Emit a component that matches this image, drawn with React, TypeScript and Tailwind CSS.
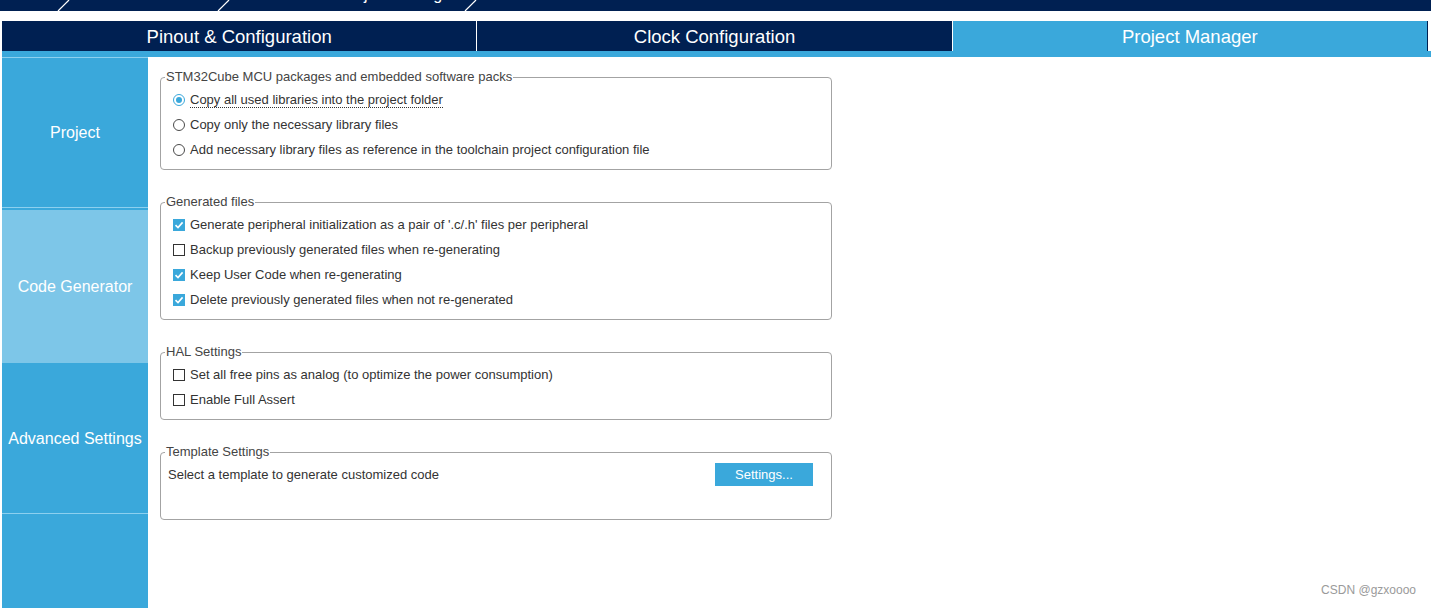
import React from "react";

const font = { fontFamily: '"Liberation Sans", Arial, sans-serif' };

const tabs = [
  { label: "Pinout & Configuration", active: false },
  { label: "Clock Configuration", active: false },
  { label: "Project Manager", active: true },
];

const Radio = ({ checked }: { checked?: boolean }) => (
  <span
    className={`flex h-[12px] w-[12px] shrink-0 items-center justify-center rounded-full border bg-white ${
      checked ? "border-[#3aa8db]" : "border-[#4a4a4a]"
    }`}
  >
    {checked && <span className="h-[6px] w-[6px] rounded-full bg-[#3aa8db]" />}
  </span>
);

const Check = ({ checked }: { checked?: boolean }) =>
  checked ? (
    <span className="flex h-[12px] w-[12px] shrink-0 items-center justify-center bg-[#3aa8db]">
      <svg width="10" height="10" viewBox="0 0 10 10">
        <path d="M1.5 5.2 L4 7.6 L8.6 2.4" fill="none" stroke="white" strokeWidth="1.6" />
      </svg>
    </span>
  ) : (
    <span className="h-[12px] w-[12px] shrink-0 border border-[#333] bg-white" />
  );

function Group({ title, children, bottom = "pb-[7px]" }: { title: string; children: React.ReactNode; bottom?: string }) {
  return (
    <fieldset className={`w-[672px] rounded-[4px] border border-[#a3a3a3] pt-[3px] ${bottom}`}>
      <legend className="ml-[4px] px-[1px] text-[13px] leading-[14px] text-[#444]">{title}</legend>
      {children}
    </fieldset>
  );
}

function Row({ control, label, focus }: { control: React.ReactNode; label: string; focus?: boolean }) {
  return (
    <div className="flex h-[25px] items-center gap-[5px] pl-[12px] text-[13px] text-[#333]">
      {control}
      <span className={focus ? "border-b border-dotted border-[#333] leading-[15px]" : "leading-[15px]"}>{label}</span>
    </div>
  );
}

export default function App() {
  return (
    <div className="relative h-[608px] w-[1431px] overflow-hidden bg-white" style={font}>
      {/* breadcrumb strip, only the descenders peek out */}
      <div className="relative h-[11px] overflow-hidden bg-[#002052]">
        <svg className="absolute left-0 top-0" width="1431" height="11">
          <line x1="58" y1="11" x2="69" y2="0" stroke="white" strokeWidth="1.2" />
          <line x1="218" y1="11" x2="229" y2="0" stroke="white" strokeWidth="1.2" />
          <line x1="465" y1="11" x2="476" y2="0" stroke="white" strokeWidth="1.2" />
        </svg>
        <span className="absolute left-[339px] top-[-13px] text-[16px] leading-[16px] text-white">Project Manager</span>
      </div>

      <div className="h-[10px]" />

      {/* main tabs */}
      <div className="flex h-[30px] pl-[2px] pr-[3px]">
        {tabs.map((t, i) => (
          <div
            key={t.label}
            className={`flex flex-1 items-center justify-center pt-[1px] text-[18.5px] text-white ${
              t.active ? "bg-[#3aa8db]" : "bg-[#002052]"
            } ${i < tabs.length - 1 ? "border-r border-white" : "border-r border-[#002052]"}`}
          >
            {t.label}
          </div>
        ))}
      </div>
      <div className="ml-[2px] h-[6px] bg-[#3aa8db]" />

      <div className="flex">
        {/* side menu */}
        <div className="ml-[2px] flex h-[551px] w-[146px] flex-col bg-[#3aa8db] text-[16px] text-white">
          <div className="h-[1px] bg-[#8dd0ef]" />
          <div className="flex h-[149px] items-center justify-center pt-[1px]">Project</div>
          <div className="h-[1px] bg-[#8dd0ef]" />
          <div className="h-[2px]" />
          <div className="flex h-[153px] items-center justify-center bg-[#7dc6e8]">Code Generator</div>
          <div className="flex h-[150px] items-center justify-center pt-[1px]">Advanced Settings</div>
          <div className="h-[1px] bg-[#8dd0ef]" />
        </div>

        {/* settings panel */}
        <div className="flex flex-col gap-[25px] pl-[12px] pt-[13px]">
          <Group title="STM32Cube MCU packages and embedded software packs">
            <Row control={<Radio checked />} label="Copy all used libraries into the project folder" focus />
            <Row control={<Radio />} label="Copy only the necessary library files" />
            <Row control={<Radio />} label="Add necessary library files as reference in the toolchain project configuration file" />
          </Group>

          <Group title="Generated files">
            <Row control={<Check checked />} label="Generate peripheral initialization as a pair of '.c/.h' files per peripheral" />
            <Row control={<Check />} label="Backup previously generated files when re-generating" />
            <Row control={<Check checked />} label="Keep User Code when re-generating" />
            <Row control={<Check checked />} label="Delete previously generated files when not re-generated" />
          </Group>

          <Group title="HAL Settings">
            <Row control={<Check />} label="Set all free pins as analog (to optimize the power consumption)" />
            <Row control={<Check />} label="Enable Full Assert" />
          </Group>

          <Group title="Template Settings" bottom="pb-[32px]">
            <div className="flex h-[25px] items-center justify-between pl-[7px] pr-[18px] text-[13px] text-[#333]">
              <span>Select a template to generate customized code</span>
              <button className="h-[23px] w-[98px] bg-[#3aa8db] text-[13px] text-white">Settings...</button>
            </div>
          </Group>
        </div>
      </div>

      <span className="absolute bottom-[9px] right-[15px] text-[12px] text-[#9a9a9a]">CSDN @gzxoooo</span>
    </div>
  );
}
